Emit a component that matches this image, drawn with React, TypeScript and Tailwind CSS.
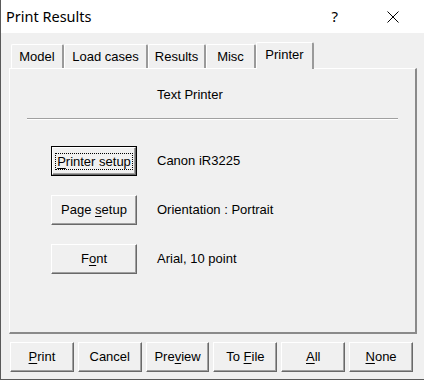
import React from "react";

// classic 3D bevel used by buttons
const bevel =
  "border border-t-white border-l-white border-r-[#696969] border-b-[#696969] shadow-[inset_-1px_-1px_0_#a0a0a0] bg-[#f0f0f0]";

function Mn({ children }: { children: React.ReactNode }) {
  return <span className="underline underline-offset-2 decoration-1">{children}</span>;
}

function Btn({ children, className = "" }: { children: React.ReactNode; className?: string }) {
  return (
    <button className={`${bevel} flex h-[30px] items-center justify-center text-[13px] text-black ${className}`}>
      <span className="whitespace-pre">{children}</span>
    </button>
  );
}

function Tab({ label, width, selected }: { label: string; width: string; selected?: boolean }) {
  return (
    <div
      className={`${width} flex items-center justify-center border-t border-l border-t-white border-l-white border-r-2 border-r-[#9a9a9a] rounded-t-[2px] text-[13px] text-black ${
        selected ? "h-[27px] -mb-px z-10 bg-[#f0f0f0] pb-[3px]" : "h-[24px] bg-[#f0f0f0]"
      }`}
    >
      {label}
    </div>
  );
}

export default function App() {
  return (
    <div
      className="flex h-[380px] w-[424px] flex-col border-l border-b border-[#5a5a5a] bg-[#f0f0f0]"
      style={{ fontFamily: '"Liberation Sans", Arial, sans-serif' }}
    >
      {/* Title bar */}
      <div className="flex h-[33px] shrink-0 items-center bg-white">
        <span className="pl-[5px] text-[14.5px] text-black" style={{ fontFamily: '"Noto Sans", sans-serif' }}>
          Print Results
        </span>
        <span className="ml-auto mr-[49px] text-[15px] text-black" style={{ fontFamily: '"Noto Sans", sans-serif' }}>
          ?
        </span>
        <svg width="12" height="12" viewBox="0 0 12 12" className="mr-[25px]">
          <path d="M0.5 0.5 L11.5 11.5 M11.5 0.5 L0.5 11.5" stroke="#000" strokeWidth="1" />
        </svg>
      </div>

      <div className="flex flex-col pl-[8px] pt-[9px]">
        {/* Tabs */}
        <div className="flex h-[26px] items-end pl-[2px]">
          <Tab label="Model" width="w-[53px]" />
          <Tab label="Load cases" width="w-[84px]" />
          <Tab label="Results" width="w-[58px]" />
          <Tab label="Misc" width="w-[50px]" />
          <Tab label="Printer" width="w-[58px]" selected />
        </div>

        {/* Panel */}
        <div className="flex h-[266px] w-[408px] flex-col border-t border-l border-t-white border-l-white border-r-2 border-b-2 border-r-[#8a8a8a] border-b-[#8a8a8a]">
          <div className="pl-[147px] pt-[18px] text-[13px] leading-[16px] text-black">Text Printer</div>
          <div className="mx-[17px] mt-[15px] h-[2px] border-t border-b border-t-[#a0a0a0] border-b-white" />

          <div className="mt-[26px] flex flex-col gap-[19px] pl-[41px]">
            <div className="flex items-center gap-[20px]">
              <button className="h-[30px] w-[86px] border border-black">
                <div className={`${bevel} flex h-full w-full items-center justify-center p-[2px]`}>
                  <span className="px-[1px] text-[13px] leading-[15px] text-black outline-1 outline-dotted outline-black">
                    <Mn>P</Mn>rinter setup
                  </span>
                </div>
              </button>
              <span className="text-[13px] text-black">Canon iR3225</span>
            </div>
            <div className="flex items-center gap-[20px]">
              <Btn className="w-[86px]">
                Page <Mn>s</Mn>etup
              </Btn>
              <span className="text-[13px] text-black">Orientation : Portrait</span>
            </div>
            <div className="flex items-center gap-[20px]">
              <Btn className="w-[86px]">
                F<Mn>o</Mn>nt
              </Btn>
              <span className="text-[13px] text-black">Arial, 10 point</span>
            </div>
          </div>
        </div>

        {/* Bottom buttons */}
        <div className="mt-[8px] ml-[1px] grid w-[403px] grid-cols-6 gap-[4px]">
          <Btn>
            <Mn>P</Mn>rint
          </Btn>
          <Btn>Cancel</Btn>
          <Btn>
            Pre<Mn>v</Mn>iew
          </Btn>
          <Btn>
            To <Mn>F</Mn>ile
          </Btn>
          <Btn>
            <Mn>A</Mn>ll
          </Btn>
          <Btn>
            <Mn>N</Mn>one
          </Btn>
        </div>
      </div>
    </div>
  );
}
